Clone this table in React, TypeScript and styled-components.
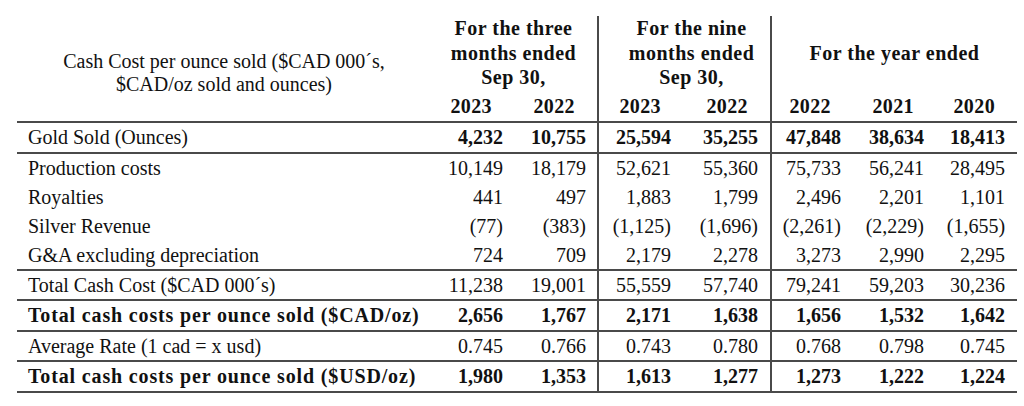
import React from "react";
import styled, { createGlobalStyle } from "styled-components";

const GlobalStyle = createGlobalStyle`
  body {
    margin: 0;
    background: #fff;
    color: #111;
    font-family: "Liberation Serif", "Times New Roman", serif;
  }
`;

const LINE = "2px solid #4a4a4a";

const Page = styled.div`
  padding: 16px 7px 0 17px;
`;

const Table = styled.table`
  width: 1000px;
  table-layout: fixed;
  border-collapse: separate;
  border-spacing: 0;
  font-size: 20px;
`;

const LabelHead = styled.th`
  font-weight: normal;
  text-align: center;
  vertical-align: middle;
  line-height: 23px;
  padding: 8px 0 0 11px;
  border-bottom: ${LINE};
`;

const GroupHead = styled.th<{ $divider?: boolean; $shift?: number }>`
  font-weight: bold;
  letter-spacing: 0.5px;
  text-align: center;
  vertical-align: middle;
  line-height: 24.5px;
  height: 74px;
  padding: 0 0 0 ${(p) => p.$shift ?? 0}px;
  border-left: ${(p) => (p.$divider ? LINE : "none")};
`;

const YearHead = styled.th<{ $divider?: boolean }>`
  font-weight: bold;
  letter-spacing: 0.4px;
  text-align: right;
  vertical-align: middle;
  height: 29px;
  line-height: 23px;
  padding: 2px 22px 0 0;
  border-left: ${(p) => (p.$divider ? LINE : "none")};
  border-bottom: ${LINE};
`;

const Label = styled.td<{ $bold?: boolean; $h: number; $line?: boolean }>`
  font-weight: ${(p) => (p.$bold ? "bold" : "normal")};
  letter-spacing: ${(p) => (p.$bold ? "0.85px" : "0")};
  height: ${(p) => p.$h}px;
  padding: 0 0 0 11px;
  white-space: nowrap;
  vertical-align: middle;
  border-bottom: ${(p) => (p.$line ? LINE : "none")};
`;

const Num = styled.td<{
  $bold?: boolean;
  $divider?: boolean;
  $line?: boolean;
  $pad: number;
}>`
  font-weight: ${(p) => (p.$bold ? "bold" : "normal")};
  text-align: right;
  padding: 0 ${(p) => p.$pad}px 0 0;
  vertical-align: middle;
  white-space: nowrap;
  border-left: ${(p) => (p.$divider ? LINE : "none")};
  border-bottom: ${(p) => (p.$line ? LINE : "none")};
`;

type Row = {
  label: string;
  values: string[];
  boldLabel?: boolean;
  boldValues?: boolean;
  line?: boolean;
  h: number;
};

const rows: Row[] = [
  {
    label: "Gold Sold (Ounces)",
    values: ["4,232", "10,755", "25,594", "35,255", "47,848", "38,634", "18,413"],
    boldValues: true,
    line: true,
    h: 29,
  },
  {
    label: "Production costs",
    values: ["10,149", "18,179", "52,621", "55,360", "75,733", "56,241", "28,495"],
    h: 29,
  },
  {
    label: "Royalties",
    values: ["441", "497", "1,883", "1,799", "2,496", "2,201", "1,101"],
    h: 29,
  },
  {
    label: "Silver Revenue",
    values: ["(77)", "(383)", "(1,125)", "(1,696)", "(2,261)", "(2,229)", "(1,655)"],
    h: 29,
  },
  {
    label: "G&A excluding depreciation",
    values: ["724", "709", "2,179", "2,278", "3,273", "2,990", "2,295"],
    line: true,
    h: 28,
  },
  {
    label: "Total Cash Cost ($CAD 000\u00B4s)",
    values: ["11,238", "19,001", "55,559", "57,740", "79,241", "59,203", "30,236"],
    line: true,
    h: 28,
  },
  {
    label: "Total cash costs per ounce sold ($CAD/oz)",
    values: ["2,656", "1,767", "2,171", "1,638", "1,656", "1,532", "1,642"],
    boldLabel: true,
    boldValues: true,
    line: true,
    h: 29,
  },
  {
    label: "Average Rate (1 cad = x usd)",
    values: ["0.745", "0.766", "0.743", "0.780", "0.768", "0.798", "0.745"],
    line: true,
    h: 28,
  },
  {
    label: "Total cash costs per ounce sold ($USD/oz)",
    values: ["1,980", "1,353", "1,613", "1,277", "1,273", "1,222", "1,224"],
    boldLabel: true,
    boldValues: true,
    line: true,
    h: 29,
  },
];

const widths = [403, 94, 83, 86, 87, 83, 83, 81];
const years = ["2023", "2022", "2023", "2022", "2022", "2021", "2020"];
const dividers = [false, false, true, false, true, false, false];

const App: React.FC = () => (
  <>
    <GlobalStyle />
    <Page>
      <Table>
        <colgroup>
          {widths.map((w, i) => (
            <col key={i} style={{ width: w }} />
          ))}
        </colgroup>
        <thead>
          <tr>
            <LabelHead rowSpan={2}>
              Cash Cost per ounce sold ($CAD 000´s,
              <br />
              $CAD/oz sold and ounces)
            </LabelHead>
            <GroupHead colSpan={2} $shift={10}>
              For the three
              <br />
              months ended
              <br />
              Sep 30,
            </GroupHead>
            <GroupHead colSpan={2} $divider $shift={14}>
              For the nine
              <br />
              months ended
              <br />
              Sep 30,
            </GroupHead>
            <GroupHead colSpan={3} $divider>
              For the year ended
            </GroupHead>
          </tr>
          <tr>
            {years.map((y, i) => (
              <YearHead key={i} $divider={dividers[i]}>
                {y}
              </YearHead>
            ))}
          </tr>
        </thead>
        <tbody>
          {rows.map((r) => (
            <tr key={r.label}>
              <Label $bold={r.boldLabel} $h={r.h} $line={r.line}>
                {r.label}
              </Label>
              {r.values.map((v, i) => (
                <Num
                  key={i}
                  $bold={r.boldValues}
                  $line={r.line}
                  $divider={dividers[i]}
                  $pad={i < 2 ? 11 : 12}
                >
                  {v}
                </Num>
              ))}
            </tr>
          ))}
        </tbody>
      </Table>
    </Page>
  </>
);

export default App;
